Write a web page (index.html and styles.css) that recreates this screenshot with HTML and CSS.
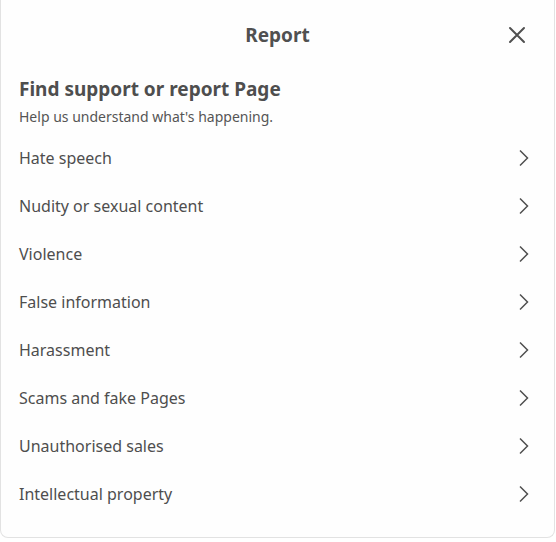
FILE: index.html
```html
<!DOCTYPE html>
<html lang="en">
<head>
<meta charset="utf-8">
<title>Report</title>
<link rel="stylesheet" href="styles.css">
</head>
<body>
<div class="dialog">
  <header class="dialog-header">
    <h1 class="dialog-title">Report</h1>
    <button class="close-btn" aria-label="Close">
      <svg width="20" height="20" viewBox="0 0 20 20"><path d="M3 3 L17 17 M17 3 L3 17" stroke="#505050" stroke-width="2" stroke-linecap="round" fill="none"/></svg>
    </button>
  </header>
  <section class="intro">
    <h2 class="intro-title">Find support or report Page</h2>
    <p class="intro-sub">Help us understand what's happening.</p>
  </section>
  <ul class="options">
    <li class="option"><span>Hate speech</span><svg class="chev" width="12" height="18" viewBox="0 0 12 18"><path d="M2 1.5 L9.5 9 L2 16.5" stroke="#505050" stroke-width="1.5" fill="none"/></svg></li>
    <li class="option"><span>Nudity or sexual content</span><svg class="chev" width="12" height="18" viewBox="0 0 12 18"><path d="M2 1.5 L9.5 9 L2 16.5" stroke="#505050" stroke-width="1.5" fill="none"/></svg></li>
    <li class="option"><span>Violence</span><svg class="chev" width="12" height="18" viewBox="0 0 12 18"><path d="M2 1.5 L9.5 9 L2 16.5" stroke="#505050" stroke-width="1.5" fill="none"/></svg></li>
    <li class="option"><span>False information</span><svg class="chev" width="12" height="18" viewBox="0 0 12 18"><path d="M2 1.5 L9.5 9 L2 16.5" stroke="#505050" stroke-width="1.5" fill="none"/></svg></li>
    <li class="option"><span>Harassment</span><svg class="chev" width="12" height="18" viewBox="0 0 12 18"><path d="M2 1.5 L9.5 9 L2 16.5" stroke="#505050" stroke-width="1.5" fill="none"/></svg></li>
    <li class="option"><span>Scams and fake Pages</span><svg class="chev" width="12" height="18" viewBox="0 0 12 18"><path d="M2 1.5 L9.5 9 L2 16.5" stroke="#505050" stroke-width="1.5" fill="none"/></svg></li>
    <li class="option"><span>Unauthorised sales</span><svg class="chev" width="12" height="18" viewBox="0 0 12 18"><path d="M2 1.5 L9.5 9 L2 16.5" stroke="#505050" stroke-width="1.5" fill="none"/></svg></li>
    <li class="option"><span>Intellectual property</span><svg class="chev" width="12" height="18" viewBox="0 0 12 18"><path d="M2 1.5 L9.5 9 L2 16.5" stroke="#505050" stroke-width="1.5" fill="none"/></svg></li>
  </ul>
</div>
</body>
</html>
```
FILE: styles.css
```css
* { box-sizing: border-box; }
html, body { margin: 0; padding: 0; background: #ffffff; }
body {
  font-family: "Noto Sans", "Open Sans", sans-serif;
  color: #4e4e4e;
  width: 556px;
  height: 542px;
  overflow: hidden;
}
.dialog {
  width: 555px;
  height: 538px;
  border: 1px solid #e2e2e2;
  border-top: none;
  border-radius: 0 0 8px 8px;
  background: #fefefe;
  display: flex;
  flex-direction: column;
}
.dialog-header {
  height: 70px;
  display: flex;
  align-items: center;
  justify-content: center;
  position: relative;
}
.dialog-title {
  margin: 0;
  font-size: 19px;
  font-weight: 700;
  color: #505050;
}
.close-btn {
  position: absolute;
  right: 27px;
  top: 25px;
  width: 20px;
  height: 20px;
  padding: 0;
  border: none;
  background: none;
  display: flex;
}
.intro {
  padding: 6px 18px 0 18px;
}
.intro-title {
  margin: 0;
  font-size: 19px;
  font-weight: 700;
  line-height: 26px;
  color: #4e4e4e;
}
.intro-sub {
  margin: 5px 0 0 0;
  font-size: 14px;
  line-height: 19px;
  color: #555;
}
.options {
  list-style: none;
  margin: 8px 0 0 0;
  padding: 0;
}
.option {
  height: 48px;
  display: flex;
  align-items: center;
  justify-content: space-between;
  padding: 0 24px 0 18px;
  font-size: 16px;
}
.chev { display: block; }
```
